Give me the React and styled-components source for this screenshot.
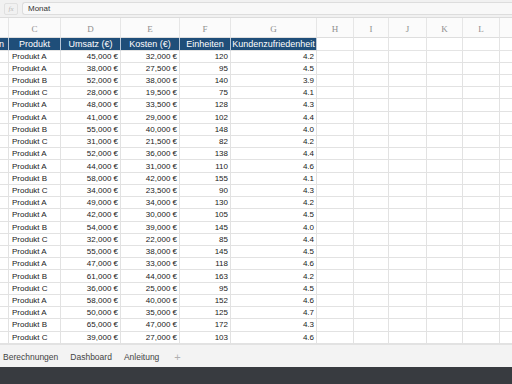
import styled, { createGlobalStyle } from "styled-components";

const GlobalStyle = createGlobalStyle`
  html, body {
    margin: 0;
    padding: 0;
    background: #ffffff;
    overflow: hidden;
  }
  body {
    font-family: "Liberation Sans", Arial, sans-serif;
  }
`;

const COLUMNS = "9px 52px 60px 59px 51px 86px 37px 35px 38px 36px 37px 40px";
const LETTERS = ["", "C", "D", "E", "F", "G", "H", "I", "J", "K", "L", ""];

const rows = [
  ["Produkt A", "45,000 €", "32,000 €", 120, "4.2"],
  ["Produkt A", "38,000 €", "27,500 €", 95, "4.5"],
  ["Produkt B", "52,000 €", "38,000 €", 140, "3.9"],
  ["Produkt C", "28,000 €", "19,500 €", 75, "4.1"],
  ["Produkt A", "48,000 €", "33,500 €", 128, "4.3"],
  ["Produkt A", "41,000 €", "29,000 €", 102, "4.4"],
  ["Produkt B", "55,000 €", "40,000 €", 148, "4.0"],
  ["Produkt C", "31,000 €", "21,500 €", 82, "4.2"],
  ["Produkt A", "52,000 €", "36,000 €", 138, "4.4"],
  ["Produkt A", "44,000 €", "31,000 €", 110, "4.6"],
  ["Produkt B", "58,000 €", "42,000 €", 155, "4.1"],
  ["Produkt C", "34,000 €", "23,500 €", 90, "4.3"],
  ["Produkt A", "49,000 €", "34,000 €", 130, "4.2"],
  ["Produkt A", "42,000 €", "30,000 €", 105, "4.5"],
  ["Produkt B", "54,000 €", "39,000 €", 145, "4.0"],
  ["Produkt C", "32,000 €", "22,000 €", 85, "4.4"],
  ["Produkt A", "55,000 €", "38,000 €", 145, "4.5"],
  ["Produkt A", "47,000 €", "33,000 €", 118, "4.6"],
  ["Produkt B", "61,000 €", "44,000 €", 163, "4.2"],
  ["Produkt C", "36,000 €", "25,000 €", 95, "4.5"],
  ["Produkt A", "58,000 €", "40,000 €", 152, "4.6"],
  ["Produkt A", "50,000 €", "35,000 €", 125, "4.7"],
  ["Produkt B", "65,000 €", "47,000 €", 172, "4.3"],
  ["Produkt C", "39,000 €", "27,000 €", 103, "4.6"],
];

const headers = ["Region", "Produkt", "Umsatz (€)", "Kosten (€)", "Einheiten", "Kundenzufriedenheit"];

const Frame = styled.div`
  width: 512px;
  height: 384px;
  display: flex;
  flex-direction: column;
  overflow: hidden;
`;

const FormulaBar = styled.div`
  box-sizing: border-box;
  height: 18px;
  flex: none;
  display: flex;
  align-items: center;
  gap: 4px;
  padding: 0 0 0 4px;
  background: #f1f1f1;
  border-bottom: 1px solid #dcdcdc;
`;

const FxButton = styled.div`
  box-sizing: border-box;
  width: 14px;
  height: 12px;
  display: flex;
  align-items: center;
  justify-content: center;
  border: 1px solid #e0e0e0;
  border-radius: 2px;
  font-family: "Liberation Serif", serif;
  font-style: italic;
  font-size: 7px;
  color: #b8b8b8;
`;

const FormulaInput = styled.div`
  box-sizing: border-box;
  flex: 1;
  height: 13px;
  display: flex;
  align-items: center;
  padding: 0 5px;
  background: #f8f8f8;
  border: 1px solid #dddddd;
  border-right: none;
  border-radius: 3px 0 0 3px;
  font-size: 8px;
  color: #333;
`;

const Sheet = styled.div`
  flex: 1;
  display: flex;
  flex-direction: column;
  overflow: hidden;
  background: #ffffff;
`;

const Row = styled.div`
  flex: none;
  display: grid;
  grid-template-columns: ${COLUMNS};
  height: ${({ $h }) => $h}px;
`;

const Letter = styled.div`
  box-sizing: border-box;
  display: flex;
  align-items: flex-end;
  justify-content: center;
  padding-bottom: 3px;
  font-family: "Liberation Serif", serif;
  font-size: 9px;
  color: #8f8f8f;
  background: #fbfbfb;
  border-right: 1px solid #e6e6e6;
  border-bottom: 1px solid #dedede;
`;

const HeadCell = styled.div`
  box-sizing: border-box;
  display: flex;
  align-items: center;
  justify-content: ${({ $end }) => ($end ? "flex-end" : "center")};
  padding-right: ${({ $end }) => ($end ? "4px" : "0")};
  overflow: hidden;
  white-space: nowrap;
  font-size: 9px;
  color: #ffffff;
  background: ${({ $blue }) => ($blue ? "#1f4e79" : "#ffffff")};
  border-right: 1px solid ${({ $blue }) => ($blue ? "#b7c6d6" : "#e4e4e4")};
  border-bottom: 1px solid #e4e4e4;
`;

const Cell = styled.div`
  box-sizing: border-box;
  display: flex;
  align-items: center;
  justify-content: ${({ $right }) => ($right ? "flex-end" : "flex-start")};
  padding: 0 2px 0 3px;
  overflow: hidden;
  white-space: nowrap;
  font-size: 8px;
  color: #222;
  border-right: 1px solid #e2e2e2;
  border-bottom: 1px solid #e2e2e2;
`;

const TabBar = styled.div`
  box-sizing: border-box;
  height: 23px;
  flex: none;
  display: flex;
  align-items: center;
  gap: 12px;
  padding: 2px 0 0 3px;
  background: #f3f3f3;
  border-top: 1px solid #e2e2e2;
`;

const Tab = styled.span`
  font-size: 8.5px;
  color: ${({ $muted }) => ($muted ? "#b0b0b0" : "#444")};
  ${({ $muted }) => $muted && "font-size: 11px; margin-left: 3px;"}
`;

const Dock = styled.div`
  height: 17px;
  flex: none;
  background: #383b40;
`;

export default function App() {
  return (
    <>
      <GlobalStyle />
      <Frame>
        <FormulaBar>
          <FxButton>fx</FxButton>
          <FormulaInput>Monat</FormulaInput>
        </FormulaBar>
        <Sheet>
          <Row $h={20}>
            {LETTERS.map((l, i) => (
              <Letter key={i}>{l}</Letter>
            ))}
          </Row>
          <Row $h={12.5}>
            {headers.map((h, i) => (
              <HeadCell key={i} $blue $end={i === 0}>
                {h}
              </HeadCell>
            ))}
            {LETTERS.slice(6).map((_, i) => (
              <HeadCell key={"e" + i} />
            ))}
          </Row>
          {rows.map((r, i) => (
            <Row key={i} $h={12.22}>
              <Cell />
              <Cell>{r[0]}</Cell>
              <Cell $right>{r[1]}</Cell>
              <Cell $right>{r[2]}</Cell>
              <Cell $right>{r[3]}</Cell>
              <Cell $right>{r[4]}</Cell>
              {LETTERS.slice(6).map((_, j) => (
                <Cell key={j} />
              ))}
            </Row>
          ))}
        </Sheet>
        <TabBar>
          <Tab>Berechnungen</Tab>
          <Tab>Dashboard</Tab>
          <Tab>Anleitung</Tab>
          <Tab $muted>+</Tab>
        </TabBar>
        <Dock />
      </Frame>
    </>
  );
}
